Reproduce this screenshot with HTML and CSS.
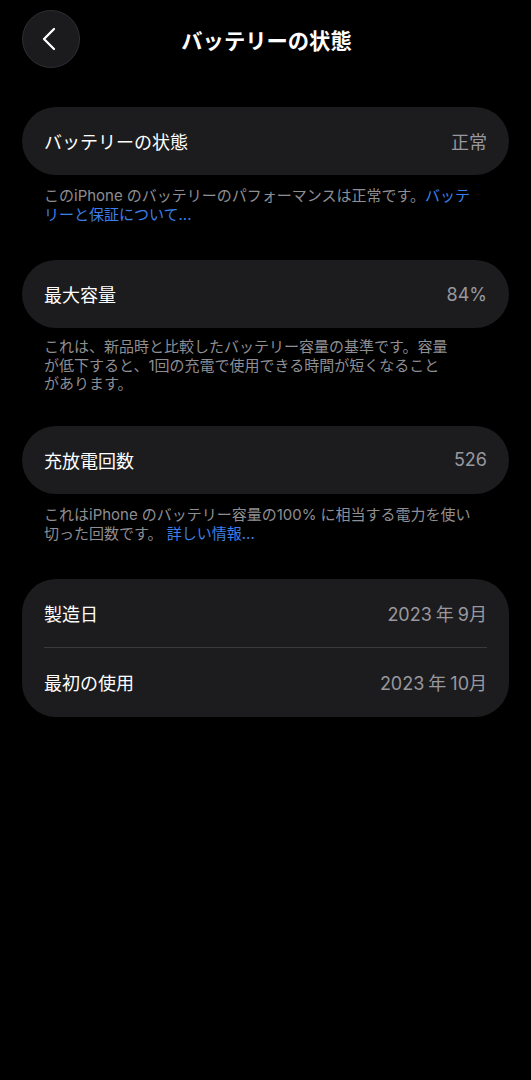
FILE: index.html
```html
<!DOCTYPE html>
<html lang="ja">
<head>
<meta charset="utf-8">
<link rel="stylesheet" href="styles.css">
</head>
<body>
<div class="page">
  <header class="nav">
    <button class="back" aria-label="戻る">
      <svg width="22" height="26" viewBox="0 0 22 26"><path d="M15 3 L5 13 L15 23" fill="none" stroke="#fff" stroke-width="2.3" stroke-linecap="round" stroke-linejoin="round"/></svg>
    </button>
    <h1 class="title">バッテリーの状態</h1>
  </header>

  <section class="group">
    <div class="card pill">
      <div class="row"><span class="label">バッテリーの状態</span><span class="value">正常</span></div>
    </div>
    <p class="note">このiPhone<span class="sp"></span>のバッテリーのパフォーマンスは正常です。<a class="link">バッテ<br>リーと保証について...</a></p>
  </section>

  <section class="group">
    <div class="card pill">
      <div class="row"><span class="label">最大容量</span><span class="value">84%</span></div>
    </div>
    <p class="note tight">これは、新品時と比較したバッテリー容量の基準です。容量<br>が低下すると、1回の充電で使用できる時間が短くなること<br>があります。</p>
  </section>

  <section class="group">
    <div class="card pill">
      <div class="row"><span class="label">充放電回数</span><span class="value">526</span></div>
    </div>
    <p class="note">これはiPhone<span class="sp"></span>のバッテリー容量の100%<span class="sp"></span>に相当する電力を使い<br>切った回数です。 <a class="link">詳しい情報...</a></p>
  </section>

  <section class="group">
    <div class="card list">
      <div class="row"><span class="label">製造日</span><span class="value">2023<span class="sp"></span>年<span class="sp"></span>9月</span></div>
      <div class="divider"></div>
      <div class="row"><span class="label">最初の使用</span><span class="value">2023<span class="sp"></span>年<span class="sp"></span>10月</span></div>
    </div>
  </section>
</div>
</body>
</html>
```

FILE: styles.css
```css
* { box-sizing: border-box; }
html, body { margin: 0; padding: 0; background: #000; }
body {
  font-family: "Inter", "Noto Sans CJK JP", "Noto Sans", sans-serif;
  color: #fff;
  width: 531px;
  height: 1080px;
}
.page {
  padding: 10px 22px 0 22px;
  display: flex;
  flex-direction: column;
}
.nav {
  position: relative;
  height: 58px;
  display: flex;
  align-items: center;
  justify-content: center;
  margin-bottom: 39px;
}
.back {
  position: absolute;
  left: 0;
  top: 0;
  width: 58px;
  height: 58px;
  border-radius: 50%;
  background: #1b1b1d;
  border: 1px solid #2e2e31;
  display: flex;
  align-items: center;
  justify-content: center;
  padding: 0;
}
.back svg { margin-left: -3px; }
.title {
  margin: 0 0 0 2px;
  font-size: 21.3px;
  font-weight: 700;
  color: #fff;
}
.group { margin-bottom: 36px; }
.card {
  background: #1c1c1e;
  padding: 0 22px;
}
.pill {
  border-radius: 34px;
  height: 68px;
  display: flex;
  flex-direction: column;
  justify-content: center;
}
.list {
  border-radius: 34px;
}
.row {
  display: flex;
  justify-content: space-between;
  align-items: center;
  height: 68px;
}
.list .row:last-child { height: 69px; }
.label { font-size: 18px; color: #fff; }
.value { font-size: 18px; color: #98989e; }
.sp { display: inline-block; width: 4px; }
.divider { height: 1px; background: #3a3a3d; }
.note {
  margin: 11px 22px 0 22px;
  font-size: 15px;
  line-height: 19px;
  color: #8e8e93;
}
.note.tight { margin-top: 10px; line-height: 18.5px; margin-bottom: -4px; }
.link { color: #3c7fe9; }
```
